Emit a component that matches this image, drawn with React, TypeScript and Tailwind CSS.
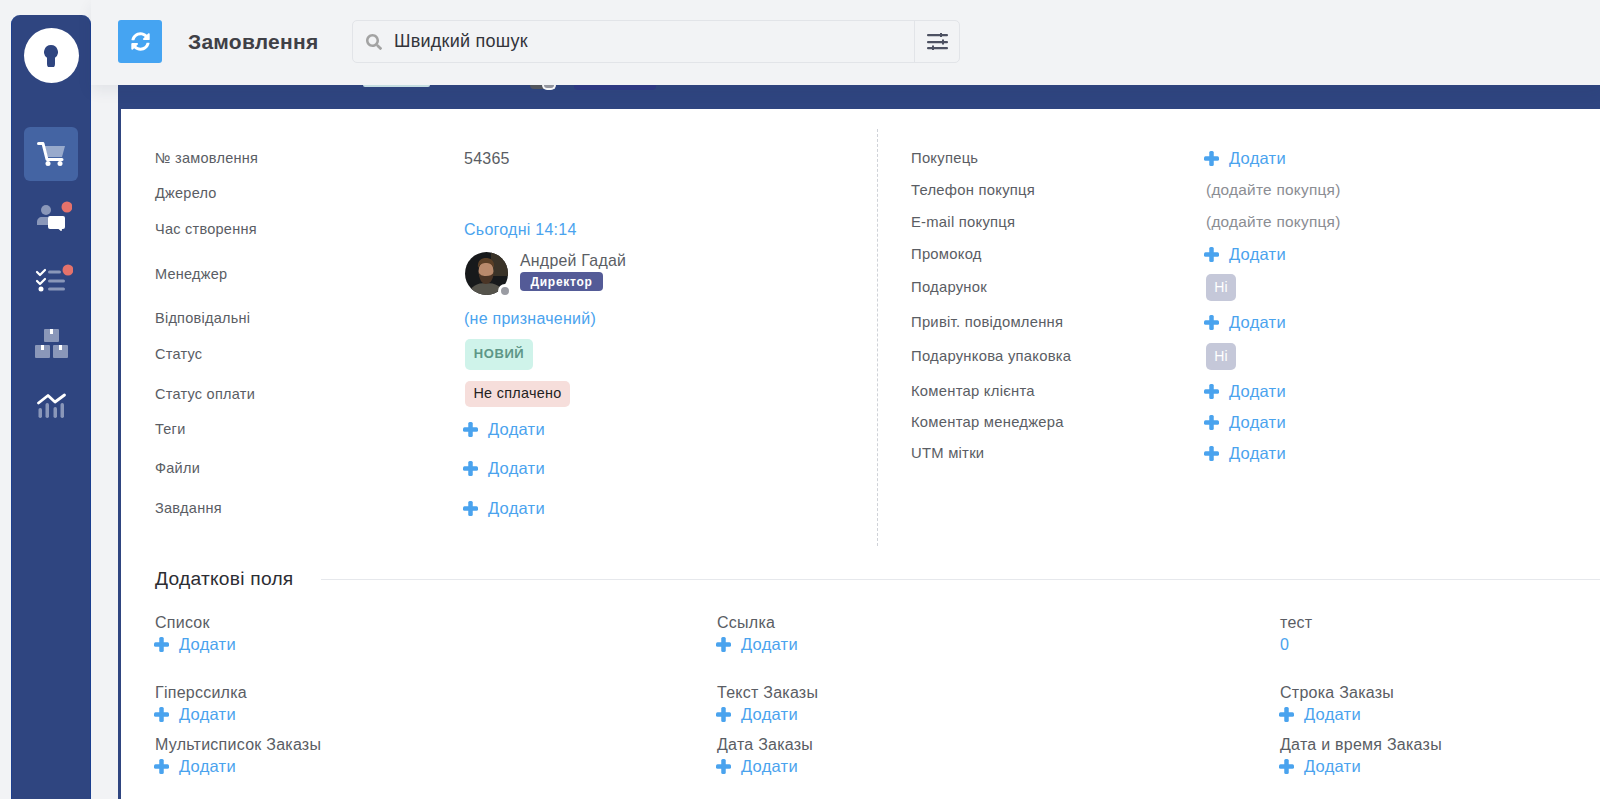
import { FaSearch, FaSyncAlt } from "react-icons/fa";

const leftRows = [
  { label: "№ замовлення", h: "h-[34px]", value: <span className="text-[16px] text-[#5a5d64]">54365</span> },
  { label: "Джерело", h: "h-[36px]", value: null },
  { label: "Час створення", h: "h-[36px]", value: <span className="text-[16px] text-[#4aa3ee]">Сьогодні 14:14</span> },
  { label: "Менеджер", h: "h-[53px]", value: <Manager /> },
  { label: "Відповідальні", h: "h-[36px]", value: <span className="text-[16px] text-[#4aa3ee]">(не призначений)</span> },
  {
    label: "Статус",
    h: "h-[36px]",
    value: (
      <span className="mb-[2px] ml-px flex h-[31px] w-[68px] items-center justify-center rounded-[5px] bg-[#cff3ea] text-[13px] font-bold tracking-[0.6px] text-[#5e9687]">
        НОВИЙ
      </span>
    ),
  },
  {
    label: "Статус оплати",
    h: "h-[44px]",
    value: (
      <span className="mb-[2px] ml-px flex h-[26px] w-[105px] items-center justify-center rounded-[5px] bg-[#f6dedb] text-[14.400px] tracking-[0.3px] text-[#222222]">
        Не сплачено
      </span>
    ),
  },
  { label: "Теги", h: "h-[26px]", value: <AddLink lifted /> },
  { label: "Файли", h: "h-[52px]", value: <AddLink lifted /> },
  { label: "Завдання", h: "h-[28px]", value: <AddLink lifted /> },
];

const rightRows = [
  { label: "Покупець", h: "h-[34px]", value: <AddLink /> },
  { label: "Телефон покупця", h: "h-[30px]", value: <Hint /> },
  { label: "E-mail покупця", h: "h-[34px]", value: <Hint /> },
  { label: "Промокод", h: "h-[30px]", value: <AddLink /> },
  { label: "Подарунок", h: "h-[37px]", value: <NoPill /> },
  { label: "Привіт. повідомлення", h: "h-[33px]", value: <AddLink /> },
  { label: "Подарункова упаковка", h: "h-[35px]", value: <NoPill /> },
  { label: "Коментар клієнта", h: "h-[35px]", value: <AddLink /> },
  { label: "Коментар менеджера", h: "h-[27px]", value: <AddLink /> },
  { label: "UTM мітки", h: "h-[34px]", value: <AddLink /> },
];

const extraFields = [
  { label: "Список" },
  { label: "Ссылка" },
  { label: "тест", value: "0" },
  { label: "Гіперссилка" },
  { label: "Текст Заказы" },
  { label: "Строка Заказы" },
  { label: "Мультисписок Заказы" },
  { label: "Дата Заказы" },
  { label: "Дата и время Заказы" },
];

function AddLink({ lifted = false }: { lifted?: boolean }) {
  return (
    <span className={`-ml-px flex items-center gap-[10px] text-[16.500px] text-[#4aa3ee] ${lifted ? "mb-[2px]" : ""}`}>
      <svg viewBox="0 0 15 15" className="h-[15px] w-[15px]" fill="currentColor">
        <rect x="0" y="5.250" width="15" height="4.500" rx="1.500" />
        <rect x="5.250" y="0" width="4.500" height="15" rx="1.500" />
      </svg>
      <span>Додати</span>
    </span>
  );
}

function Hint() {
  return <span className="ml-px text-[15.400px] text-[#8b8d93]">(додайте покупця)</span>;
}

function NoPill() {
  return (
    <span className="ml-px flex h-[27px] w-[30px] items-center justify-center rounded-[5px] bg-[#c5c8d9] text-[14px] text-white">
      Ні
    </span>
  );
}

function Manager() {
  return (
    <div className="ml-px flex items-center gap-[12px] pb-[2px]">
      <div className="relative h-[43px] w-[43px]">
        <svg viewBox="0 0 43 43" className="h-[43px] w-[43px] rounded-full">
          <rect width="43" height="43" fill="#17191b" />
          <rect x="26" y="0" width="17" height="24" fill="#3a3328" />
          <path d="M4 43c1-9 8-12 17-12s17 3 18 12z" fill="#55534b" />
          <ellipse cx="21" cy="19" rx="7.5" ry="10" fill="#b98a6c" />
          <path d="M13.5 20c1 9 4 12 7.500 12s7-3 8-12c-2 3-4 4-8 4s-6-1-7.500-4z" fill="#4a3526" />
          <path d="M13 16c-1-8 4-10 8-10s9 2 8 10c-2-4-5-5-8-5s-6 1-8 5z" fill="#5b3f26" />
        </svg>
        <span className="absolute right-[-4px] bottom-[-3px] h-[14px] w-[14px] rounded-full border-[3px] border-white bg-[#9a9ca3]" />
      </div>
      <div className="flex flex-col pb-[6px]">
        <span className="text-[15.900px] leading-[22px] text-[#5a5d64]">Андрей Гадай</span>
        <span className="flex h-[19px] w-[83px] items-center justify-center rounded-[4px] bg-[#545b97] text-[12px] font-bold tracking-[0.7px] text-white">
          Директор
        </span>
      </div>
    </div>
  );
}

function Logo() {
  return (
    <div className="flex h-[55px] w-[55px] items-center justify-center rounded-full bg-white">
      <svg viewBox="0 0 14 22" className="h-[22px] w-[14px]" fill="#2f4580">
        <path d="M7 0a7 7 0 0 1 4 12.700V19a3 3 0 0 1-8 0v-6.300A7 7 0 0 1 7 0z" />
      </svg>
    </div>
  );
}

function CartIcon() {
  return (
    <svg viewBox="0 0 28 24" className="h-[24px] w-[28px]">
      <path d="M7.500 4H28l-3 11H10.500z" fill="#ffffff" fillOpacity="0.45" />
      <path d="M1.500 1.500h4.500l4 16h15" fill="none" stroke="#ffffff" strokeWidth="3" strokeLinecap="round" strokeLinejoin="round" />
      <circle cx="11" cy="21.500" r="2.500" fill="#ffffff" />
      <circle cx="23" cy="21.500" r="2.500" fill="#ffffff" />
    </svg>
  );
}

function PeopleIcon() {
  return (
    <svg viewBox="0 0 42 30" className="h-[30px] w-[42px]">
      <circle cx="16" cy="9" r="5" fill="#8a97b9" />
      <path d="M7 24v-3c0-3 2-5 5-5h6v8z" fill="#8a97b9" />
      <path d="M20 15h13a2 2 0 0 1 2 2v9a2 2 0 0 1-2 2h-1l-.500 2.500-3-2.500h-8.500a2 2 0 0 1-2-2v-9a2 2 0 0 1 2-2z" fill="#ffffff" />
      <circle cx="37" cy="6" r="5.500" fill="#e5726b" />
    </svg>
  );
}

function TasksIcon() {
  return (
    <svg viewBox="0 0 44 30" className="h-[30px] w-[44px]">
      <path d="M8 8l3 3 5-5M8 17l3 3 5-5" fill="none" stroke="#ffffff" strokeWidth="2.200" strokeLinecap="round" strokeLinejoin="round" />
      <circle cx="12" cy="25" r="2.500" fill="#ffffff" />
      <rect x="19" y="6.500" width="13" height="3" rx="1.500" fill="#8a97b9" />
      <rect x="19" y="15.500" width="17" height="3" rx="1.500" fill="#8a97b9" />
      <rect x="19" y="23.500" width="17" height="3" rx="1.500" fill="#8a97b9" />
      <circle cx="39" cy="6" r="5.500" fill="#e5726b" />
    </svg>
  );
}

function BoxesIcon() {
  return (
    <svg viewBox="0 0 33 30" className="h-[30px] w-[33px]">
      <rect x="9" y="0" width="15" height="13" rx="1" fill="#8a97b9" />
      <rect x="15" y="0" width="3" height="5" fill="#ffffff" />
      <rect x="0" y="16" width="15" height="13" rx="1" fill="#8a97b9" />
      <rect x="6" y="16" width="3" height="5" fill="#ffffff" />
      <rect x="18" y="16" width="15" height="13" rx="1" fill="#8a97b9" />
      <rect x="24" y="16" width="3" height="5" fill="#ffffff" />
    </svg>
  );
}

function ChartIcon() {
  return (
    <svg viewBox="0 0 29 25" className="h-[25px] w-[29px]">
      <path d="M1.500 10l9.500-7.500 7 6.500 9.500-7" fill="none" stroke="#ffffff" strokeWidth="2.800" strokeLinecap="round" strokeLinejoin="round" />
      <rect x="1.500" y="15" width="3.500" height="10" rx="1.700" fill="#8a97b9" />
      <rect x="8.500" y="10" width="3.500" height="15" rx="1.700" fill="#8a97b9" />
      <rect x="16.500" y="14" width="3.500" height="11" rx="1.700" fill="#8a97b9" />
      <rect x="23.500" y="10" width="3.500" height="15" rx="1.700" fill="#8a97b9" />
    </svg>
  );
}

function SlidersIcon() {
  return (
    <svg viewBox="0 0 21 17" className="h-[17px] w-[21px]" fill="#4d5162">
      <rect x="0" y="1" width="21" height="2.200" rx="1" />
      <rect x="0" y="8" width="21" height="2.200" rx="1" />
      <rect x="0" y="14" width="21" height="2.200" rx="1" />
      <rect x="13" y="0" width="2" height="4" />
      <rect x="15" y="6.500" width="2" height="5" />
      <rect x="5" y="12.500" width="2" height="4.500" />
    </svg>
  );
}

function Sidebar() {
  return (
    <aside className="ml-[11px] mt-[15px] flex w-[80px] shrink-0 flex-col items-center rounded-t-[9px] border-x border-[#1c3f8f] bg-[#2f4580] pt-[13px]">
      <Logo />
      <div className="mt-[44px] flex h-[54px] w-[54px] items-center justify-center rounded-[6px] bg-[#4464a3]">
        <CartIcon />
      </div>
      <div className="mt-[20px] flex h-[30px] w-[54px] items-center justify-center"><PeopleIcon /></div>
      <div className="mt-[33px] flex h-[30px] w-[54px] items-center justify-center"><TasksIcon /></div>
      <div className="mt-[35px] flex h-[30px] w-[54px] items-center justify-center"><BoxesIcon /></div>
      <div className="mt-[34px] flex h-[25px] w-[54px] items-center justify-center"><ChartIcon /></div>
    </aside>
  );
}

function Header() {
  return (
    <header className="relative z-10 flex h-[85px] shrink-0 items-center bg-[#f2f3f5] pb-[2px] shadow-[0_6px_14px_rgba(40,50,80,0.08)]">
      <button type="button" className="ml-[27px] flex h-[43px] w-[44px] items-center justify-center rounded-[3px] bg-[#45a4f2] text-white">
        <FaSyncAlt className="h-[19px] w-[19px]" />
      </button>
      <h1 className="ml-[26px] w-[130px] whitespace-nowrap text-[21px] font-bold text-[#3f4046]">Замовлення</h1>
      <div className="ml-[34px] flex h-[43px] w-[608px] items-center rounded-[5px] border border-[#e2e4e8]">
        <FaSearch className="ml-[13px] h-[16px] w-[16px] text-[#a3a3a3]" />
        <span className="ml-[12px] flex-1 text-[18px] text-[#33343a]">Швидкий пошук</span>
        <div className="flex h-full w-[45px] items-center justify-center border-l border-[#e2e4e8]">
          <SlidersIcon />
        </div>
      </div>
    </header>
  );
}

function OrderColumns() {
  return (
    <div className="ml-[34px] mt-[20px] flex h-[417px]">
      <div className="w-[722px] pt-[13px]">
        {leftRows.map((row) => (
          <div key={row.label} className={`flex items-center ${row.h}`}>
            <span className="w-[309px] shrink-0 text-[#5a5d64]">{row.label}</span>
            {row.value}
          </div>
        ))}
      </div>
      <div className="flex-1 border-l border-dashed border-[#cfd2d8] pl-[33px] pt-[12px]">
        {rightRows.map((row) => (
          <div key={row.label} className={`flex items-center ${row.h}`}>
            <span className="w-[294px] shrink-0 text-[14.800px] text-[#5a5d64]">{row.label}</span>
            {row.value}
          </div>
        ))}
      </div>
    </div>
  );
}

function ExtraFields() {
  return (
    <section className="ml-[34px] mt-[23px]">
      <div className="flex h-[20px] items-center">
        <h2 className="text-[19.200px] font-normal text-[#2c2d33]">Додаткові поля</h2>
        <div className="ml-[27px] h-px flex-1 bg-[#e6e8ec]" />
      </div>
      <div className="mt-[23px] grid grid-cols-[562px_563px_1fr] grid-rows-[70px_52px_52px]">
        {extraFields.map((field) => (
          <div key={field.label} className="flex flex-col">
            <span className="h-[22px] text-[16px] leading-[22px] text-[#5a5d64]">{field.label}</span>
            <div className="flex h-[22px] items-center">
              {field.value ? <span className="text-[16px] text-[#4aa3ee]">{field.value}</span> : <AddLink lifted />}
            </div>
          </div>
        ))}
      </div>
    </section>
  );
}

export default function App() {
  return (
    <div className="flex h-[799px] w-[1600px] overflow-hidden bg-[#f2f3f5] font-['Liberation_Sans',Arial,sans-serif] text-[14.500px] tracking-[0.25px]">
      <Sidebar />
      <main className="flex min-w-0 flex-1 flex-col">
        <Header />
        <div className="ml-[27px] flex-1 border-l-[3px] border-[#2f4580] bg-white">
          <div className="relative h-[24px] bg-[#2f4580]">
            {/* bottom edges of the scrolled-away header row peek out under the top bar */}
            <span className="absolute left-[242px] top-0 h-[2px] w-[67px] rounded-b-[4px] bg-[#cfe8ea]" />
            <span className="absolute left-[409px] top-0 h-[4px] w-[20px] rounded-bl-full bg-[#55585f]" />
            <span className="absolute left-[421px] top-0 h-[5px] w-[14px] rounded-b-full border-x-2 border-b-2 border-white bg-[#9a9ca3]" />
            <span className="absolute left-[453px] top-0 h-[5px] w-[82px] rounded-b-[4px] bg-[#2f3a86]" />
          </div>
          <OrderColumns />
          <ExtraFields />
        </div>
      </main>
    </div>
  );
}
